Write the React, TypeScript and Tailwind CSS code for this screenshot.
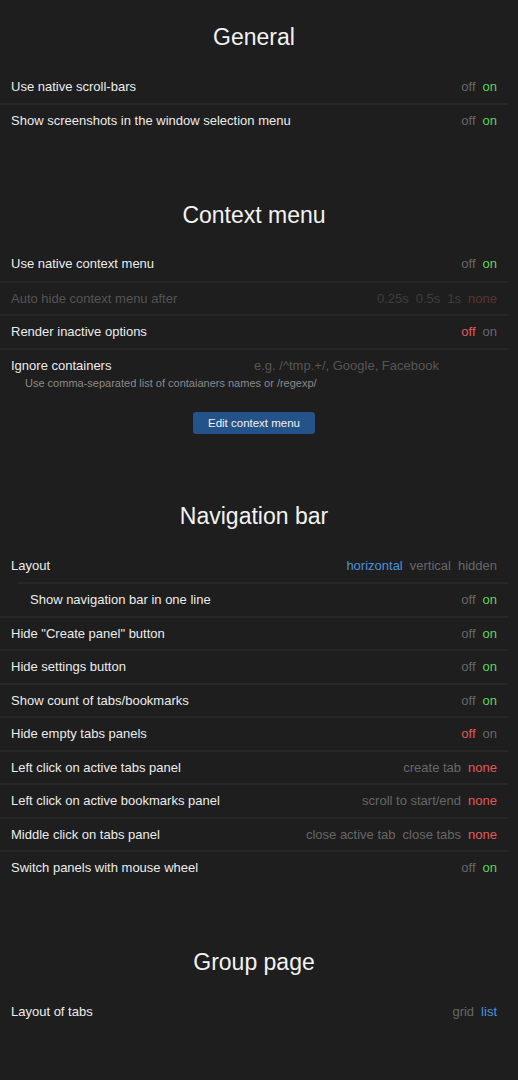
import React from "react";

type Opt = { t: string; c: string };

const G = "text-[#676767]";
const ON = "text-[#60d160]";
const RED = "text-[#e05a5a]";
const BLUE = "text-[#4a93dc]";

const offOn: Opt[] = [
  { t: "off", c: G },
  { t: "on", c: ON },
];
const offRed: Opt[] = [
  { t: "off", c: RED },
  { t: "on", c: G },
];

function Row({
  label,
  options,
  first,
  indent,
  disabled,
}: {
  label: string;
  options: Opt[];
  first?: boolean;
  indent?: boolean;
  disabled?: boolean;
}) {
  return (
    <div
      className={
        "flex h-[33.5px] items-center justify-between pr-[11px] " +
        (first ? "" : "border-t-2 border-[#272727] ") +
        (indent ? "ml-[18px] pl-[12px]" : "pl-[11px]")
      }
    >
      <span className={disabled ? "text-[#545454]" : "text-[#ececec]"}>{label}</span>
      <div className="flex gap-[7px]">
        {options.map((o, i) => (
          <span key={i} className={o.c}>
            {o.t}
          </span>
        ))}
      </div>
    </div>
  );
}

function Title({ children }: { children: React.ReactNode }) {
  return (
    <h2 className="mb-[17.5px] h-[30px] text-center text-[23px] leading-[30px] font-normal text-[#f2f2f2]">
      {children}
    </h2>
  );
}

export default function App() {
  return (
    <div
      className="min-h-screen bg-[#1e1e1e] pt-[22px] text-[13px] leading-[15px]"
      style={{ fontFamily: '"Liberation Sans", Arial, sans-serif' }}
    >
      <div className="w-[508px]">
        <section>
          <Title>General</Title>
          <Row first label="Use native scroll-bars" options={offOn} />
          <Row label="Show screenshots in the window selection menu" options={offOn} />
        </section>

        <section className="mt-[63px]">
          <Title>Context menu</Title>
          <Row first label="Use native context menu" options={offOn} />
          <Row
            disabled
            label="Auto hide context menu after"
            options={[
              { t: "0.25s", c: "text-[#3e3e3e]" },
              { t: "0.5s", c: "text-[#3e3e3e]" },
              { t: "1s", c: "text-[#3e3e3e]" },
              { t: "none", c: "text-[#5c3434]" },
            ]}
          />
          <Row label="Render inactive options" options={offRed} />
          <div className="border-t-2 border-[#272727] pt-[8px] pl-[11px] pr-[11px]">
            <div className="flex">
              <span className="w-[243px] text-[#ececec]">Ignore containers</span>
              <span className="text-[#565656]">e.g. /^tmp.+/, Google, Facebook</span>
            </div>
            <div className="mt-[4px] pl-[14px] text-[11px] leading-[13px] text-[#8a8a8a]">
              Use comma-separated list of contaianers names or /regexp/
            </div>
          </div>
          <div className="mt-[22.5px] flex justify-center">
            <button className="h-[22px] w-[122px] rounded-[3px] bg-[#24538a] text-[11.5px] leading-[22px] text-[#f0f0f0]">
              Edit context menu
            </button>
          </div>
        </section>

        <section className="mt-[67px]">
          <Title>Navigation bar</Title>
          <Row
            first
            label="Layout"
            options={[
              { t: "horizontal", c: BLUE },
              { t: "vertical", c: G },
              { t: "hidden", c: G },
            ]}
          />
          <Row indent label="Show navigation bar in one line" options={offOn} />
          <Row label={'Hide "Create panel" button'} options={offOn} />
          <Row label="Hide settings button" options={offOn} />
          <Row label="Show count of tabs/bookmarks" options={offOn} />
          <Row label="Hide empty tabs panels" options={offRed} />
          <Row
            label="Left click on active tabs panel"
            options={[
              { t: "create tab", c: G },
              { t: "none", c: RED },
            ]}
          />
          <Row
            label="Left click on active bookmarks panel"
            options={[
              { t: "scroll to start/end", c: G },
              { t: "none", c: RED },
            ]}
          />
          <Row
            label="Middle click on tabs panel"
            options={[
              { t: "close active tab", c: G },
              { t: "close tabs", c: G },
              { t: "none", c: RED },
            ]}
          />
          <Row label="Switch panels with mouse wheel" options={offOn} />
        </section>

        <section className="mt-[63.5px]">
          <Title>Group page</Title>
          <Row
            first
            label="Layout of tabs"
            options={[
              { t: "grid", c: G },
              { t: "list", c: BLUE },
            ]}
          />
        </section>
      </div>
    </div>
  );
}
